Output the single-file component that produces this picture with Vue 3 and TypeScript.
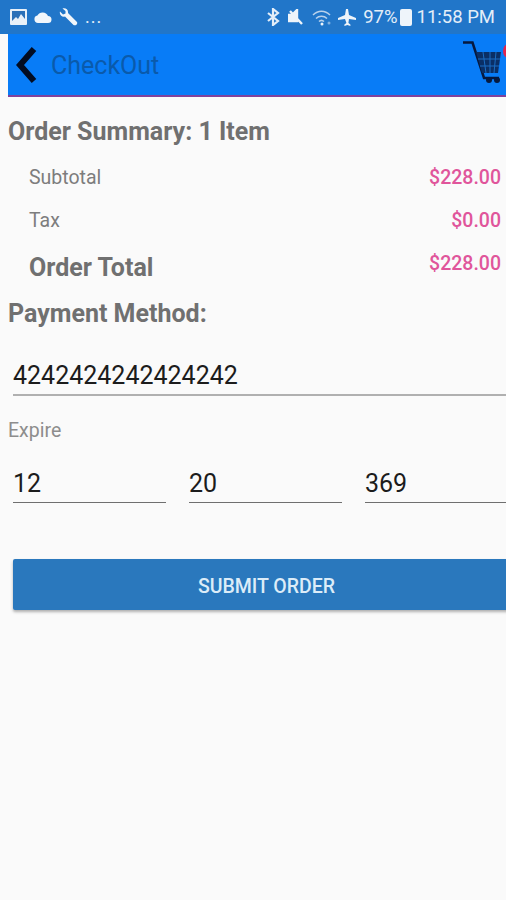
<script setup lang="ts">
const rows = [
  { label: "Subtotal", value: "$228.00" },
  { label: "Tax", value: "$0.00" },
];
</script>

<template>
  <div class="screen">
    <div class="status">
      <div class="status-left">
        <svg width="17" height="16" viewBox="0 0 17 16"><rect x="0" y="0" width="17" height="16" rx="1" fill="#e8f0f8" /><rect x="2" y="2" width="13" height="10" fill="#2a70b8" /><path d="M2 12l4-4 2 2 3-5 4 5v2z" fill="#e8f0f8" /></svg>
        <svg width="18" height="12" viewBox="0 0 18 12"><path d="M4 12a3.800 3.800 0 0 1-.6-7.500A6 6 0 0 1 14 5a3.500 3.500 0 0 1 0 7z" fill="#f1f6fb" /></svg>
        <svg width="19" height="19" viewBox="0 0 19 19"><path d="M1 3.500L4 6.500 6.500 5.500V3L3.500 0.500C6.500-0.500 9.500 1.500 9 5l9 9c1 2-1.500 4-3.500 3L6 8.500C3 9.500 0 6.500 1 3.500z" fill="#f1f6fb" /></svg>
        <span class="dots">...</span>
      </div>
      <div class="status-right">
        <svg width="13" height="18" viewBox="0 0 13 18"><path d="M1 5l10 8-5 4V1l5 4L1 13" fill="none" stroke="#e4eef8" stroke-width="2.200" /></svg>
        <svg class="gap-wide" width="16" height="17" viewBox="0 0 16 17"><path d="M1 6h3l5-5v11l-4 0H1zM2 2l12 13" fill="#eef4fa" stroke="#eef4fa" stroke-width="2.400" /></svg>
        <svg class="gap-wide" width="20" height="17" viewBox="0 0 20 17"><path d="M1 6c5-5 12-5 17 0M4 9.500c3-3 8-3 11 0M7 12.500c1.500-1.500 3.500-1.500 5 0" fill="none" stroke="#b9d2ec" stroke-width="1.500" /><circle cx="10" cy="15" r="1.500" fill="#eef4fa" /><circle cx="17" cy="14" r="1.500" fill="#7fb0e0" /></svg>
        <svg class="gap-plane" width="18" height="17" viewBox="0 0 18 17"><path d="M8 0h2l1 6 7 3v2l-7-1-.6 4 2 1.500V17l-3-1-3 1v-1.500l2-1.500L7 10l-7 1V9l7-3z" fill="#eef4fa" /></svg>
        <span class="pct">97%</span>
        <span class="battery"></span>
        <span class="time">11:58 PM</span>
      </div>
    </div>

    <header class="toolbar">
      <svg class="back" width="26" height="38" viewBox="0 0 26 38"><path d="M21 3L7 19l14 16" fill="none" stroke="#020c22" stroke-width="6" /></svg>
      <span class="title">CheckOut</span>
      <div class="cart">
        <svg width="43" height="44" viewBox="0 0 43 44">
          <path d="M0 1.500h9.500L21 37h15" fill="none" stroke="#06193f" stroke-width="2.500" />
          <path d="M13 11h25l-3 21H19z" fill="#0a2f66" />
          <path d="M20 11l3 21M27 11v21M33 11l-2 21M15 18h22M17 25h19" stroke="#1a6cc2" stroke-width="1" />
          <circle cx="26" cy="39" r="3" fill="#06193f" />
          <circle cx="34" cy="39" r="3" fill="#06193f" />
        </svg>
        <span class="cart-badge"></span>
      </div>
    </header>

    <main class="content">
      <h2 class="heading">Order Summary: 1 Item</h2>
      <div v-for="row in rows" :key="row.label" class="row">
        <span class="row-label">{{ row.label }}</span>
        <span class="price">{{ row.value }}</span>
      </div>
      <div class="row total">
        <span class="total-label">Order Total</span>
        <span class="price">$228.00</span>
      </div>
      <h2 class="heading">Payment Method:</h2>

      <div class="field card">4242424242424242</div>
      <div class="expire">Expire</div>
      <div class="trio">
        <div class="field small">12</div>
        <div class="field small">20</div>
        <div class="field small">369</div>
      </div>
      <button class="submit">SUBMIT ORDER</button>
    </main>
  </div>
</template>

<style>
html,
body {
  margin: 0;
  background: #fafafa;
}
</style>

<style scoped>
.screen {
  width: 506px;
  height: 900px;
  overflow: hidden;
  background: #fafafa;
  font-family: Roboto, "Liberation Sans", sans-serif;
}

.status {
  height: 34px;
  box-sizing: border-box;
  padding: 0 11px 0 10px;
  background: #2176c9;
  color: #e4eef8;
  display: flex;
  justify-content: space-between;
  align-items: center;
}

.status-left,
.status-right {
  display: flex;
  align-items: center;
  gap: 7px;
}

.status-right {
  gap: 0;
}

.gap-wide {
  margin-left: 8px;
}

.gap-plane {
  margin-left: 6px;
}

.dots {
  font-size: 18px;
  letter-spacing: 1px;
  line-height: 34px;
}

.pct {
  font-size: 18.500px;
  margin-left: 7px;
}

.battery {
  width: 12px;
  height: 17px;
  margin-left: 2px;
  background: #eef4fa;
  border-radius: 2px;
}

.time {
  font-size: 18.500px;
  margin-left: 5px;
}

.toolbar {
  height: 61px;
  margin-left: 8px;
  background: #087cf7;
  border-bottom: 2px solid #80429c;
  display: flex;
  align-items: center;
  position: relative;
}

.back {
  margin-left: 5px;
}

.title {
  margin: 2px 0 0 12px;
  font-size: 25px;
  color: #0a5aab;
}

.cart {
  position: absolute;
  left: 455px;
  top: 7px;
}

.cart svg {
  display: block;
}

.cart-badge {
  position: absolute;
  right: -8px;
  top: 3px;
  width: 11px;
  height: 14px;
  background: #e0244e;
  border-radius: 50%;
}

.content {
  padding: 21px 0 0 8px;
}

.heading {
  margin: 0;
  font-size: 25px;
  line-height: 28px;
  font-weight: 700;
  color: #707070;
}

.row {
  display: flex;
  justify-content: space-between;
  padding: 0 5px 0 21px;
  height: 43px;
  align-items: center;
  font-size: 19.500px;
}

.row:first-of-type {
  margin-top: 10px;
}

.row-label {
  color: #7d7d7d;
}

.price {
  color: #e0559b;
  font-weight: 500;
}

.total {
  height: 58px;
  align-items: flex-start;
}

.total .price {
  margin-top: 11px;
  line-height: 22px;
}

.total-label {
  margin-top: 12px;
  font-size: 25px;
  line-height: 28px;
  font-weight: 700;
  color: #707070;
}

.field {
  font-size: 25px;
  line-height: 30px;
  color: #1c1c1c;
  box-sizing: content-box;
}

.card {
  margin: 33px -30px 0 5px;
  height: 33px;
  border-bottom: 2px solid #b0b0b0;
}

.expire {
  margin-top: 24px;
  font-size: 19.500px;
  line-height: 22px;
  color: #8d8d8d;
}

.trio {
  margin: 27px -30px 0 5px;
  display: grid;
  grid-template-columns: 153px 153px 153px;
  gap: 23px;
}

.small {
  height: 33px;
  border-bottom: 1px solid #6f6f6f;
}

.submit {
  display: block;
  margin: 56px 0 0 5px;
  width: 507px;
  height: 51px;
  padding: 3px 0 0;
  border: none;
  border-radius: 2px;
  background: #2a78bd;
  color: #dcecf8;
  font-family: inherit;
  font-size: 19.500px;
  font-weight: 500;
  box-shadow: 0 2px 3px rgba(0, 0, 0, 0.3);
}
</style>
